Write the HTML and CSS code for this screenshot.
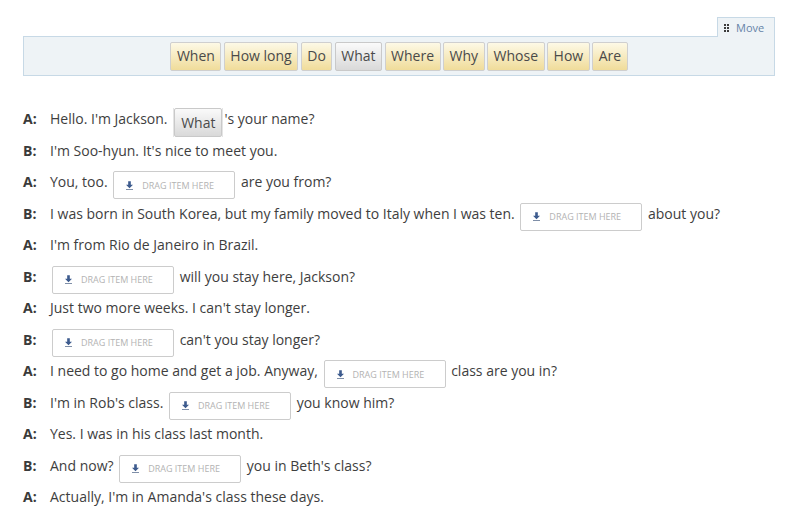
FILE: index.html
```html
<!DOCTYPE html>
<html>
<head>
<meta charset="utf-8">
<link rel="stylesheet" href="styles.css">
</head>
<body>
<div class="page">
  <div class="bank">
    <div class="move"><span class="grip"><i></i><i></i><i></i><i></i><i></i><i></i></span>Move</div>
    <div class="words">
      <span class="word">When</span>
      <span class="word">How long</span>
      <span class="word">Do</span>
      <span class="word used">What</span>
      <span class="word">Where</span>
      <span class="word">Why</span>
      <span class="word">Whose</span>
      <span class="word">How</span>
      <span class="word">Are</span>
    </div>
  </div>

  <div class="dialog">
    <div class="row"><b class="who">A:</b>Hello. I'm Jackson. <span class="filled"><span class="word used">What</span></span>'s your name?</div>
    <div class="row"><b class="who">B:</b>I'm Soo-hyun. It's nice to meet you.</div>
    <div class="row"><b class="who">A:</b>You, too. <span class="drop"><svg class="dl" viewBox="0 0 8 10"><path d="M2.5 0h3v4h2.5L4 8 0 4h2.5z" fill="#3d5b8e"/><rect x="0" y="9" width="8" height="1" fill="#6d7f9c"/></svg>DRAG ITEM HERE</span> are you from?</div>
    <div class="row"><b class="who">B:</b>I was born in South Korea, but my family moved to Italy when I was ten. <span class="drop"><svg class="dl" viewBox="0 0 8 10"><path d="M2.5 0h3v4h2.5L4 8 0 4h2.5z" fill="#3d5b8e"/><rect x="0" y="9" width="8" height="1" fill="#6d7f9c"/></svg>DRAG ITEM HERE</span> about you?</div>
    <div class="row"><b class="who">A:</b>I'm from Rio de Janeiro in Brazil.</div>
    <div class="row"><b class="who">B:</b><span class="drop first"><svg class="dl" viewBox="0 0 8 10"><path d="M2.5 0h3v4h2.5L4 8 0 4h2.5z" fill="#3d5b8e"/><rect x="0" y="9" width="8" height="1" fill="#6d7f9c"/></svg>DRAG ITEM HERE</span> will you stay here, Jackson?</div>
    <div class="row"><b class="who">A:</b>Just two more weeks. I can't stay longer.</div>
    <div class="row"><b class="who">B:</b><span class="drop first"><svg class="dl" viewBox="0 0 8 10"><path d="M2.5 0h3v4h2.5L4 8 0 4h2.5z" fill="#3d5b8e"/><rect x="0" y="9" width="8" height="1" fill="#6d7f9c"/></svg>DRAG ITEM HERE</span> can't you stay longer?</div>
    <div class="row"><b class="who">A:</b>I need to go home and get a job. Anyway, <span class="drop"><svg class="dl" viewBox="0 0 8 10"><path d="M2.5 0h3v4h2.5L4 8 0 4h2.5z" fill="#3d5b8e"/><rect x="0" y="9" width="8" height="1" fill="#6d7f9c"/></svg>DRAG ITEM HERE</span> class are you in?</div>
    <div class="row"><b class="who">B:</b>I'm in Rob's class. <span class="drop"><svg class="dl" viewBox="0 0 8 10"><path d="M2.5 0h3v4h2.5L4 8 0 4h2.5z" fill="#3d5b8e"/><rect x="0" y="9" width="8" height="1" fill="#6d7f9c"/></svg>DRAG ITEM HERE</span> you know him?</div>
    <div class="row"><b class="who">A:</b>Yes. I was in his class last month.</div>
    <div class="row"><b class="who">B:</b>And now? <span class="drop"><svg class="dl" viewBox="0 0 8 10"><path d="M2.5 0h3v4h2.5L4 8 0 4h2.5z" fill="#3d5b8e"/><rect x="0" y="9" width="8" height="1" fill="#6d7f9c"/></svg>DRAG ITEM HERE</span> you in Beth's class?</div>
    <div class="row"><b class="who">A:</b>Actually, I'm in Amanda's class these days.</div>
  </div>
</div>
</body>
</html>
```

FILE: styles.css
```css
html, body {
  margin: 0;
  padding: 0;
  background: #fff;
}
body {
  font-family: "Open Sans", "DejaVu Sans", sans-serif;
  font-size: 14px;
  color: #3e3e3e;
}
.page {
  padding: 36px 30px 0 23px;
}
.bank {
  position: relative;
  width: 750px;
  height: 38px;
  border: 1px solid #c7d9e6;
  background: #eef3f6;
  display: flex;
  align-items: center;
  justify-content: center;
}
.move {
  position: absolute;
  right: -1px;
  top: -20px;
  width: 56px;
  height: 19px;
  border: 1px solid #c7d9e6;
  border-bottom: none;
  background: #eef3f6;
  font-size: 11px;
  color: #6683a8;
  display: flex;
  align-items: center;
  box-sizing: content-box;
}
.grip {
  display: grid;
  grid-template-columns: 2px 2px;
  grid-template-rows: 2px 2px 2px;
  gap: 1px;
  margin: 0 7px 0 6px;
}
.grip i {
  display: block;
  width: 2px;
  height: 2px;
  background: #3c3c3c;
}
.words {
  display: flex;
  gap: 2.5px;
}
.word {
  display: inline-flex;
  align-items: center;
  height: 27px;
  padding: 0 5.5px;
  border: 1px solid #cfcfcf;
  border-radius: 2px;
  background: linear-gradient(#fdf9e6, #f0dc9a);
  color: #4a4a4a;
  font-size: 14px;
  line-height: 1;
  box-sizing: content-box;
}
.word.used {
  background: linear-gradient(#fafafa, #d9d9d9);
  border-color: #c9c9c9;
}
.dialog {
  margin-top: 27px;
}
.row {
  height: 31.5px;
  line-height: 31.5px;
  white-space: nowrap;
}
.who {
  display: inline-block;
  width: 27px;
  font-weight: bold;
  color: #3a3a3a;
}
.filled {
  display: inline-block;
  vertical-align: middle;
  line-height: 1;
  margin: 0 1px 0 2px;
  border-left: 1px solid #e4e4e4;
  border-right: 1px solid #e4e4e4;
  position: relative;
  top: 2px;
}
.filled .word {
  height: 26px;
  padding: 1px 6px 0;
}
.drop {
  display: inline-flex;
  align-items: center;
  vertical-align: middle;
  width: 120px;
  height: 26px;
  line-height: 1;
  margin: 0 2px;
  border: 1px solid #cccccc;
  border-radius: 2px;
  background: #fff;
  color: #b3b3b3;
  font-size: 9px;
  text-transform: uppercase;
  box-sizing: content-box;
  position: relative;
  top: 2px;
}
.drop.first {
  margin-left: 2px;
}
.dl {
  width: 7px;
  height: 9px;
  margin: 0 9px 0 12px;
  flex: none;
}
```
